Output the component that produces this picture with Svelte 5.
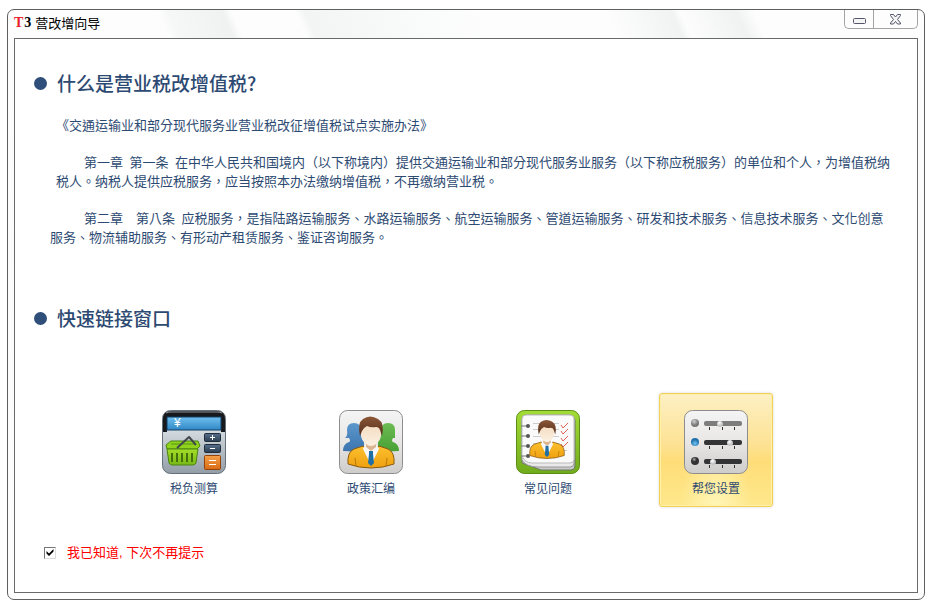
<script lang="ts">
  type LinkId = 'calc' | 'policy' | 'faq' | 'setup';

  const links: { id: LinkId; label: string }[] = [
    { id: 'calc', label: '税负测算' },
    { id: 'policy', label: '政策汇编' },
    { id: 'faq', label: '常见问题' },
    { id: 'setup', label: '帮您设置' }
  ];

  const sliders = [
    { y: 13, knob: 36, dot: 'url(#dotGrey)', bar: '#7d7d7d' },
    { y: 32, knob: 46, dot: 'url(#dotBlue)', bar: '#333436' },
    { y: 51, knob: 29, dot: 'url(#dotDark)', bar: '#333436' }
  ];

  let active = $state<LinkId>('setup');
  let dontShow = $state(true);
</script>

{#snippet person()}
  <path d="M9 54 Q8 42 15 39 L24 36 L32 42 L40 36 L49 39 Q56 42 55 54 Q44 58 32 58 Q20 58 9 54 Z" fill="url(#suit)" stroke="#8a5a12" stroke-width="1" />
  <path d="M16 48 L17 56 M48 48 L47 56" stroke="#b87908" stroke-width="1" />
  <path d="M26 35 L38 35 L40 39 L32 55 L24 39 Z" fill="#f7f7f7" />
  <path d="M30 41 L34 41 L34 44 L35 53 L32 56 L29 53 L30 44 Z" fill="#1f6fa5" />
  <path d="M27 31 L37 31 L37 37 L32 41 L27 37 Z" fill="#dcb591" />
  <path d="M22 20 Q22 11 32 11 Q42 11 42 20 Q42 30 37 34 Q32 38 27 34 Q22 30 22 20 Z" fill="url(#face)" />
  <path d="M21 26 Q18 13 24 9 Q31 4 39 9 Q46 13 43 26 L41 20 Q40 17 37 17 Q32 18 28 16 Q24 18 23 21 Z" fill="url(#hair)" />
{/snippet}

{#snippet icon(id: LinkId)}
  <svg class="icon" viewBox="0 0 64 64" aria-hidden="true">
    {#if id === 'calc'}
      <rect x="0.5" y="0.5" width="63" height="63" rx="8" fill="url(#steel)" stroke="#65707a" />
      <path d="M1 22 V9 Q1 1 9 1 H55 Q63 1 63 9 V22 H59 V7 H5 V22 Z" fill="#17191c" />
      <path d="M4 3 Q6 2 9 2 H55 Q58 2 60 3" fill="none" stroke="#8d9499" />
      <rect x="5" y="7" width="54" height="13" fill="url(#screen)" stroke="#123f63" />
      <text x="12" y="17" class="yen">¥</text>
      <path d="M4 35 L9 31 H36 L38 36 L35 39 H5 Z" fill="#8fd31c" stroke="#4b8510" stroke-width="1" />
      <path d="M9 34 H34" stroke="#5d9418" stroke-width="1" />
      <path d="M5 39 H36 L34 53 Q33 55 31 55 H10 Q8 55 7 53 Z" fill="url(#basket)" stroke="#4b8510" stroke-width="1" />
      <path d="M10 43 V52 M15 43 V52 M20 43 V52 M25 43 V52 M30 43 V52" stroke="#44700c" stroke-width="2" />
      <path d="M15 38 L27 27 L34 35" fill="none" stroke="#43484c" stroke-width="2" stroke-linejoin="round" />
      <rect x="42.500" y="23.500" width="16" height="8" rx="1" fill="url(#key)" stroke="#1e2c3c" />
      <rect x="42.500" y="34.500" width="16" height="8" rx="1" fill="url(#key)" stroke="#1e2c3c" />
      <rect x="42.500" y="45.500" width="16" height="14" rx="1" fill="url(#orange)" stroke="#93420b" />
      <path d="M48 27.500 H53 M50.500 25 V30 M48 38.500 H53" stroke="#fff" stroke-width="1" />
      <path d="M47 50.500 H54 M47 54.500 H54" stroke="#fff" stroke-width="1" />
    {:else if id === 'policy'}
      <rect x="0.5" y="0.5" width="63" height="63" rx="8" fill="url(#silver)" stroke="#8d8d8d" />
      <path d="M4 41 Q4 34 10 32 Q12 31 10 28 L6 28 Q9 26 8 20 Q8 13 15 13 Q22 13 22 21 Q21 28 25 32 V42 Z" fill="url(#blueMan)" />
      <path d="M60 41 Q60 34 54 32 Q52 31 54 28 L56 28 Q56 25 56 20 Q56 13 49 13 Q42 13 42 21 Q43 28 39 32 V42 Z" fill="url(#greenMan)" />
      {@render person()}
    {:else if id === 'faq'}
      <rect x="0.5" y="0.5" width="63" height="63" rx="8" fill="url(#greenFrame)" stroke="#5c8d17" />
      <path d="M6 11 Q6 7 10 7 H54 Q59 7 59 11 V56 Q59 60 55 60 H25 L6 53 Z" fill="#c9c9c9" stroke="#6a7760" stroke-width="1" />
      <path d="M6 9 Q6 5 10 5 H53 Q58 5 58 9 V53 Q58 57 54 57 H22 Q10 57 6 50 Z" fill="#e9e9e9" stroke="#999" stroke-width="1" />
      <path d="M6 9 Q6 5 10 5 H53 Q58 5 58 9 V49 Q58 53 54 53 H16 Q9 53 6 46 Z" fill="#fafafa" stroke="#bbb" stroke-width="1" />
      <path d="M17 13.500 H43 M17 19.500 H43 M17 26.500 H43 M17 33.500 H43 M17 40.500 H51" stroke="#ccc" stroke-width="1" />
      {#each [16, 26, 36, 46] as y}
        <path d="M5 {y} H11" stroke="#777" stroke-width="1" />
        <circle cx="12" cy={y} r="2" fill="#555" />
      {/each}
      <path d="M45 15 L47 18 L52 13 M45 21 L47 24 L52 19 M45 28 L47 31 L52 26 M45 34 L47 37 L52 32" fill="none" stroke="#e0605a" stroke-width="1" />
      <g transform="translate(7 5) scale(0.75)">
        {@render person()}
      </g>
    {:else}
      <rect x="0.5" y="0.5" width="63" height="63" rx="8" fill="url(#silver)" stroke="#8d8d8d" />
      {#each sliders as s}
        <circle cx="11" cy={s.y} r="4" fill={s.dot} />
        <rect x="20" y={s.y - 2} width="38" height="5" rx="2" fill={s.bar} />
        <path d="M25.500 {s.y + 4} v3 M38.500 {s.y + 4} v3 M50.500 {s.y + 4} v3" stroke="#333" stroke-width="1" />
        <circle cx={s.knob} cy={s.y + 1} r="3" fill="url(#knob)" />
      {/each}
    {/if}
  </svg>
{/snippet}

<svg class="defs" width="0" height="0" aria-hidden="true">
  <defs>
    <linearGradient id="steel" x2="0" y2="1"><stop offset="0.3" stop-color="#d5dce1" /><stop offset="1" stop-color="#939da6" /></linearGradient>
    <linearGradient id="screen" x2="0" y2="1"><stop stop-color="#6fc0ee" /><stop offset="1" stop-color="#3087c6" /></linearGradient>
    <linearGradient id="basket" x2="0" y2="1"><stop stop-color="#a4dd28" /><stop offset="1" stop-color="#78b916" /></linearGradient>
    <linearGradient id="key" x2="0" y2="1"><stop stop-color="#57708c" /><stop offset="1" stop-color="#2b3d52" /></linearGradient>
    <linearGradient id="orange" x2="0" y2="1"><stop stop-color="#f5a04a" /><stop offset="1" stop-color="#d96a14" /></linearGradient>
    <linearGradient id="silver" x2="0" y2="1"><stop stop-color="#f4f4f4" /><stop offset="0.5" stop-color="#e9e7e6" /><stop offset="1" stop-color="#cfcdcc" /></linearGradient>
    <linearGradient id="suit" x2="0" y2="1"><stop stop-color="#fcc02e" /><stop offset="1" stop-color="#efa010" /></linearGradient>
    <linearGradient id="face" x2="0" y2="1"><stop stop-color="#f3d8bb" /><stop offset="1" stop-color="#fbf1e2" /></linearGradient>
    <linearGradient id="hair" x2="0" y2="1"><stop stop-color="#8b5636" /><stop offset="1" stop-color="#55301c" /></linearGradient>
    <linearGradient id="blueMan" x2="0" y2="1"><stop stop-color="#5c97cc" /><stop offset="1" stop-color="#3b74ae" /></linearGradient>
    <linearGradient id="greenMan" x2="0" y2="1"><stop stop-color="#6cbc52" /><stop offset="1" stop-color="#47a035" /></linearGradient>
    <linearGradient id="greenFrame" x2="0" y2="1"><stop stop-color="#a3dc35" /><stop offset="1" stop-color="#70ab1c" /></linearGradient>
    <radialGradient id="dotGrey" cx="0.4" cy="0.3"><stop stop-color="#d0d0d0" /><stop offset="1" stop-color="#777" /></radialGradient>
    <radialGradient id="dotBlue" cx="0.5" cy="0.7"><stop stop-color="#6fc3f2" /><stop offset="1" stop-color="#2271ab" /></radialGradient>
    <radialGradient id="dotDark" cx="0.4" cy="0.3"><stop stop-color="#aaa" /><stop offset="0.6" stop-color="#333" /></radialGradient>
    <radialGradient id="knob" cx="0.4" cy="0.3"><stop stop-color="#fff" /><stop offset="1" stop-color="#c5c5c5" /></radialGradient>
  </defs>
</svg>

<div class="window">
  <header class="titlebar">
    <div class="title"><b class="brand"><span class="t">T</span><span>3</span></b>营改增向导</div>
    <div class="controls">
      <button class="min" aria-label="最小化">
        <svg width="13" height="6" viewBox="0 0 13 6"><rect x="0.500" y="0.500" width="12" height="5" rx="1" fill="#f4f4f4" stroke="#55566b" /></svg>
      </button>
      <button class="close" aria-label="关闭">
        <svg width="13" height="11" viewBox="0 0 13 11"><path d="M1.500 0.500 H4.500 L6.500 3 L8.500 0.500 H11.500 V1.500 L8.500 5.500 L11.500 9 V10 H8.500 L6.500 7.500 L4.500 10 H1.500 V9 L4.500 5.500 L1.500 1.500 Z" fill="#f4f4f4" stroke="#55566b" /></svg>
      </button>
    </div>
  </header>

  <main>
    <h2>什么是营业税改增值税?</h2>
    <div class="article">
      <p>《交通运输业和部分现代服务业营业税改征增值税试点实施办法》</p>
      <p class="indent">第一章&ensp;第一条&ensp;在中华人民共和国境内（以下称境内）提供交通运输业和部分现代服务业服务（以下称应税服务）的单位和个人，为增值税纳税人。纳税人提供应税服务，应当按照本办法缴纳增值税，不再缴纳营业税。</p>
      <p class="indent outdent">第二章&ensp;&ensp;第八条&ensp;应税服务，是指陆路运输服务、水路运输服务、航空运输服务、管道运输服务、研发和技术服务、信息技术服务、文化创意服务、物流辅助服务、有形动产租赁服务、鉴证咨询服务。</p>
    </div>

    <h2 class="quick">快速链接窗口</h2>
    <nav class="links">
      {#each links as link}
        <button class="tile" class:active={active === link.id} onclick={() => (active = link.id)}>
          {@render icon(link.id)}
          <span>{link.label}</span>
        </button>
      {/each}
    </nav>

    <label class="dismiss">
      <input type="checkbox" bind:checked={dontShow} />
      我已知道, 下次不再提示
    </label>
  </main>
</div>

<style>
  :global(body) {
    margin: 0;
    background: #fff;
  }

  .defs {
    position: absolute;
  }

  .window {
    box-sizing: border-box;
    display: flex;
    flex-direction: column;
    min-height: calc(100vh - 14px);
    margin: 9px 15px 5px 7px;
    padding: 0 6px 6px;
    border: 1px solid #5e5f61;
    border-radius: 7px;
    background: linear-gradient(#fdfdfd, #fafbfa 40%, #fdfdfd);
    font-family: 'Liberation Sans', 'Noto Sans CJK SC', sans-serif;
    color: #2d4a72;
  }

  .titlebar {
    display: flex;
    justify-content: space-between;
    align-items: flex-start;
    height: 28px;
    background: linear-gradient(
      66deg,
      transparent 17%,
      #f6f7f7 18%,
      #f0f1f1 24%,
      transparent 25%,
      transparent 32%,
      #f3f4f4 33%,
      #fafbfb 46%,
      transparent 52%,
      transparent 66%,
      #f1f2f2 73%,
      transparent 74%,
      #f0f1f1 80%,
      transparent 82%
    );
  }

  .title {
    display: flex;
    align-items: center;
    gap: 4px;
    height: 25px;
    color: #000;
    font-size: 13px;
  }

  .brand {
    display: flex;
    gap: 1px;
    font-family: 'Liberation Serif', serif;
    font-size: 14px;
  }

  .t {
    color: #e8202a;
  }

  .controls {
    display: flex;
  }

  .controls button {
    display: flex;
    justify-content: center;
    align-items: center;
    box-sizing: border-box;
    height: 19px;
    padding: 0;
    border: 1px solid #a3a3a3;
    border-top: 0;
    background: #fdfdfd;
  }

  .controls .min {
    width: 29px;
    padding-top: 4px;
    border-right: 0;
    border-bottom-left-radius: 5px;
  }

  .controls .close {
    width: 45px;
    border-bottom-right-radius: 5px;
  }

  main {
    flex: 1;
    padding: 30px 13px 20px 19px;
    border: 1px solid #68696b;
    background: #fff;
  }

  h2 {
    display: flex;
    align-items: center;
    gap: 10px;
    margin: 0;
    font-family: 'Noto Sans CJK SC', sans-serif;
    font-size: 19px;
    font-weight: 500;
    line-height: 28px;
  }

  h2::before {
    content: '';
    width: 13px;
    height: 13px;
    border-radius: 50%;
    background: #2f4f7a;
  }

  .quick {
    margin-top: 58px;
  }

  .article {
    display: flex;
    flex-direction: column;
    gap: 18px;
    margin-top: 18px;
    padding: 0 11px 0 22px;
    font-family: 'Noto Sans CJK TC', sans-serif;
    font-size: 13px;
    line-height: 19px;
    text-spacing-trim: space-all;
  }

  p {
    margin: 0;
  }

  .indent {
    text-indent: 28px;
  }

  .outdent {
    margin: 0 6px 0 -6px;
    text-indent: 34px;
  }

  .links {
    display: flex;
    gap: 45px;
    margin-top: 61px;
    padding-left: 94px;
  }

  .tile {
    display: flex;
    flex-direction: column;
    align-items: center;
    gap: 6px;
    box-sizing: border-box;
    width: 132px;
    height: 114px;
    padding: 16px 0 0;
    border: 1px solid transparent;
    border-radius: 3px;
    background: none;
    font: inherit;
    font-size: 12px;
    line-height: 18px;
    color: inherit;
  }

  .active {
    width: 114px;
    border-color: #f3d057;
    background:
      radial-gradient(ellipse at 50% 105%, #fff6b8, transparent 45%),
      linear-gradient(#fdf0c4, #fde294 45%, #fedd78 60%, #fee88c);
    box-shadow: inset 0 0 0 1px #fff0a8, 0 0 3px #d8d8d8;
  }

  .icon {
    width: 64px;
    height: 64px;
  }

  .yen {
    font: 12px 'Liberation Sans', sans-serif;
    fill: #fff;
  }

  .dismiss {
    display: flex;
    align-items: center;
    gap: 11px;
    width: fit-content;
    margin-top: 36px;
    padding-left: 10px;
    font-size: 13px;
    line-height: 19px;
    color: #f00;
  }

  .dismiss input {
    appearance: none;
    width: 12px;
    height: 12px;
    margin: 0;
    border: 1px solid #ddd;
    border-top-color: #777;
    border-left-color: #777;
    background: #fff;
  }

  .dismiss input:checked::after {
    content: '';
    display: block;
    width: 10px;
    height: 10px;
    background: #000;
    clip-path: polygon(15% 35%, 40% 60%, 85% 15%, 85% 40%, 40% 85%, 15% 60%);
  }
</style>
